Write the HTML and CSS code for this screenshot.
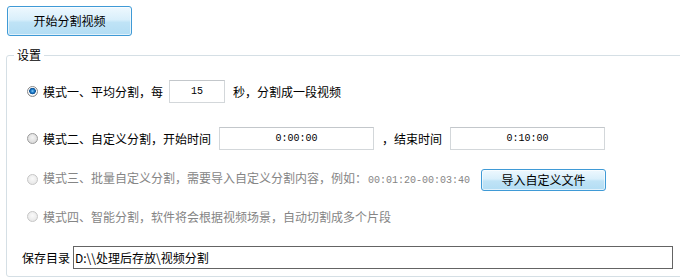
FILE: index.html
```html
<!DOCTYPE html>
<html>
<head>
    <title>视频分割</title>
    <link rel="stylesheet" href="styles.css">
</head>
<body>
    <button type="button" class="btn btn-start">开始分割视频</button>
    <fieldset class="group">
        <legend class="group-title">设置</legend>
        <div class="row row-1">
            <span class="radio checked"></span>
            <span class="label">模式一、平均分割，每</span>
            <input type="text" class="field field-short" value="15">
            <span class="label gap">秒，分割成一段视频</span>
        </div>
        <div class="row row-2">
            <span class="radio"></span>
            <span class="label">模式二、自定义分割，开始时间</span>
            <input type="text" class="field field-time" value="0:00:00">
            <span class="label gap">，结束时间</span>
            <input type="text" class="field field-time" value="0:10:00">
        </div>
        <div class="row row-3 disabled">
            <span class="radio"></span>
            <span class="label">模式三、批量自定义分割，需要导入自定义分割内容，例如：<span class="num">00:01:20-00:03:40</span></span>
            <button type="button" class="btn btn-import">导入自定义文件</button>
        </div>
        <div class="row row-4 disabled">
            <span class="radio"></span>
            <span class="label">模式四、智能分割，软件将会根据视频场景，自动切割成多个片段</span>
        </div>
        <div class="row row-save">
            <span class="label">保存目录</span>
            <input type="text" class="field-path" value="D:\\处理后存放\视频分割">
        </div>
    </fieldset>
</body>
</html>
```

FILE: styles.css
```css
body {
    margin: 0;
    background: #fff;
    color: #000;
    font-family: "Noto Sans CJK SC", sans-serif;
    font-size: 12px;
    overflow: hidden;
    width: 680px;
    height: 279px;
}
.btn {
    display: block;
    box-sizing: border-box;
    border: 1px solid #3f9ad6;
    border-radius: 3px;
    background: linear-gradient(#eef8fe, #d9effb 45%, #bfe3f6 55%, #b3ddf4);
    box-shadow: inset 0 0 0 1px rgba(255, 255, 255, 0.6);
    color: #000;
    font-family: "Noto Sans CJK SC", sans-serif;
    font-size: 12px;
    line-height: 14px;
    padding: 0;
    cursor: pointer;
}
.btn-start {
    margin: 6px 0 0 7px;
    width: 125px;
    height: 30px;
}
.btn-import {
    width: 125px;
    height: 22px;
    margin-left: 11px;
}
.group {
    margin: 12px -20px 0 6px;
    padding: 0 0 7px 0;
    min-width: 0;
    border: 1px solid #d5dfe5;
    border-radius: 3px;
}
.group-title {
    margin-left: 7px;
    padding: 0 3px;
    line-height: 14px;
}
.row {
    display: flex;
    align-items: center;
    height: 23px;
    padding-left: 20px;
    white-space: nowrap;
}
.row-1 { margin-top: 18px; }
.row-2 { margin-top: 24px; }
.row-3 { margin-top: 18px; }
.row-4 { margin-top: 14px; }
.row-save {
    margin-top: 18px;
    padding-left: 15px;
}
.label {
    line-height: 14px;
}
.gap {
    margin-left: 8px;
}
.disabled .label {
    color: #858585;
}
.num {
    font-family: "Liberation Mono", monospace;
    font-size: 10px;
    margin-left: 1px;
}
.radio {
    box-sizing: border-box;
    width: 11px;
    height: 11px;
    border-radius: 50%;
    border: 1px solid #9b9b9b;
    background: radial-gradient(circle at 50% 40%, #f4f4f4, #d2d2d2);
    margin-right: 5px;
    flex: none;
}
.radio.checked {
    border-color: #8a8a8a;
    background: radial-gradient(circle at 50% 45%, #8fd0f8 0, #2283d2 1.5px, #0d4f90 3px, #fff 3.6px, #fff 4px, #dcdcdc 5px);
}
.disabled .radio {
    border-color: #c6c6c6;
    background: radial-gradient(circle at 50% 40%, #fafafa, #e2e2e2);
}
.field {
    box-sizing: border-box;
    height: 23px;
    border: 1px solid #d3d7da;
    border-top-color: #c3c7cb;
    background: #fff;
    font-family: "Liberation Mono", monospace;
    font-size: 10px;
    text-align: center;
    padding: 0;
    outline: 0;
    color: #000;
}
.field-short {
    width: 56px;
    margin-left: 6px;
}
.field-time {
    width: 155px;
    margin-left: 8px;
}
.field-path {
    box-sizing: border-box;
    width: 600px;
    height: 23px;
    margin-left: 3px;
    border: 1px solid #646464;
    padding: 0 1px;
    font-family: "Noto Sans CJK SC", sans-serif;
    font-size: 12px;
    color: #000;
    outline: 0;
}
```
